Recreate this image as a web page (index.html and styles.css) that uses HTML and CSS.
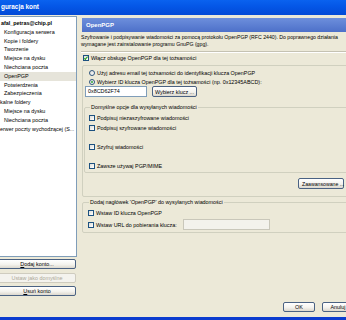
FILE: index.html
```html
<!DOCTYPE html>
<html lang="pl">
<head>
    <meta charset="UTF-8">
    <meta name="viewport" content="width=device-width, initial-scale=1.0">
    <title>Konfiguracja kont</title>
    <link rel="stylesheet" href="styles.css">
</head>
<body>
    <div class="window">
        <div class="titlebar">guracja kont</div>

        <div class="main">
            <div class="sidebar">
                <div class="tree">
                    <div class="node root default">afal_petras@chip.pl</div>
                    <div class="node">Konfiguracja serwera</div>
                    <div class="node">Kopie i foldery</div>
                    <div class="node">Tworzenie</div>
                    <div class="node">Miejsce na dysku</div>
                    <div class="node">Niechciana poczta</div>
                    <div class="node selected">OpenPGP</div>
                    <div class="node">Potwierdzenia</div>
                    <div class="node">Zabezpieczenia</div>
                    <div class="node root">kalne foldery</div>
                    <div class="node">Miejsce na dysku</div>
                    <div class="node">Niechciana poczta</div>
                    <div class="node root">erwer poczty wychodzącej (S...</div>
                </div>
                <button class="btn side-btn"><u>D</u>odaj konto...</button>
                <button class="btn side-btn" disabled>Ustaw jako domyślne</button>
                <button class="btn side-btn"><u>U</u>suń konto</button>
            </div>

            <div class="pane">
                <div class="pane-header">OpenPGP</div>
                <p class="desc">Szyfrowanie i podpisywanie wiadomości za pomocą protokołu OpenPGP (RFC 2440). Do poprawnego działania<br>wymagane jest zainstalowanie programu GnuPG (gpg).</p>
                <div class="separator"></div>
                <label class="option enable"><span class="checkbox checked"></span>Włącz obsługę OpenPGP dla tej tożsamości</label>

                <div class="group key-group">
                    <label class="option"><span class="radio"></span>Użyj adresu email tej tożsamości do identyfikacji klucza OpenPGP</label>
                    <label class="option"><span class="radio checked"></span>Wybierz ID klucza OpenPGP dla tej tożsamości (np. 0x12345ABCD):</label>
                    <div class="key-row">
                        <div class="textbox key-box">0x8CD62F74</div>
                        <button class="btn key-btn">Wybierz klucz ...</button>
                    </div>

                    <fieldset class="group defaults">
                        <legend>Domyślne opcje dla wysyłanych wiadomości</legend>
                        <label class="option first"><span class="checkbox"></span>Podpisuj niezaszyfrowane wiadomości</label>
                        <label class="option near"><span class="checkbox"></span>Podpisuj szyfrowane wiadomości</label>
                        <label class="option far"><span class="checkbox"></span>Szyfruj wiadomości</label>
                        <label class="option far"><span class="checkbox"></span>Zawsze używaj PGP/MIME</label>
                    </fieldset>

                    <div class="advanced-row">
                        <button class="btn advanced-btn">Zaawansowane ...</button>
                    </div>
                </div>

                <fieldset class="group header-group">
                    <legend>Dodaj nagłówek 'OpenPGP' do wysyłanych wiadomości</legend>
                    <label class="option first"><span class="checkbox"></span>Wstaw ID klucza OpenPGP</label>
                    <label class="option url-row"><span class="checkbox"></span>Wstaw URL do pobierania klucza:<span class="textbox url-box"></span></label>
                </fieldset>
            </div>
        </div>

        <div class="footer">
            <button class="btn dlg-btn">OK</button>
            <button class="btn dlg-btn">Anuluj</button>
        </div>
    </div>
</body>
</html>
```

FILE: styles.css
```css
html, body {
    margin: 0;
    padding: 0;
    overflow: hidden;
}

body {
    background: #ece9d8;
    font-family: 'Liberation Sans', Arial, sans-serif;
    font-size: 5.4px;
    color: #000;
}

.window {
    width: 356px;
    height: 320px;
    box-sizing: border-box;
    border-bottom: 3px solid #0b3ccf;
    background: #ece9d8;
}

.titlebar {
    height: 15px;
    background: linear-gradient(#0a62ef, #0456e6 45%, #034ad6);
    color: #fff;
    font-weight: bold;
    font-size: 6.4px;
    line-height: 14px;
    padding-left: 1px;
    white-space: nowrap;
}

.main {
    display: flex;
    height: 285px;
}

/* account tree + buttons */
.sidebar {
    width: 77px;
    flex-shrink: 0;
}

.tree {
    box-sizing: border-box;
    height: 241px;
    margin-top: 1px;
    padding-top: 2px;
    background: #fff;
    border: 1px solid #7f9db9;
    border-left: none;
}

.node {
    height: 8.8px;
    line-height: 8.8px;
    padding-left: 4px;
    white-space: nowrap;
    overflow: hidden;
}

.node.root {
    padding-left: 0;
}

.node.default {
    font-weight: bold;
    padding-left: 1px;
}

.node.selected {
    background: #e6e4da;
}

.btn {
    box-sizing: border-box;
    height: 10px;
    padding: 0;
    border: 1px solid #4a6283;
    border-radius: 2px;
    background: linear-gradient(#ffffff, #f4f3ee 55%, #dcd8ce);
    font-family: inherit;
    font-size: 5.4px;
    line-height: 8px;
    color: #000;
    white-space: nowrap;
}

.btn u {
    text-decoration: underline;
}

.side-btn {
    display: block;
    width: 78px;
    margin-left: -2px;
    margin-top: 3px;
}

.side-btn:first-of-type {
    margin-top: 2px;
}

.side-btn:disabled {
    margin-top: 4px;
    border-color: #cfccbf;
    background: #f4f3ee;
    color: #aca899;
}

/* right pane */
.pane {
    flex: 1;
    min-width: 0;
    margin-left: 4px;
    padding-right: 2px;
}

.pane-header {
    margin: 3px 0 0 1px;
    height: 14px;
    background: linear-gradient(#6d8fdc, #4d70c9);
    color: #fff;
    font-weight: bold;
    font-size: 6px;
    line-height: 14px;
    padding-left: 4px;
}

.desc {
    margin: 2px 0 0;
    font-size: 5.2px;
    line-height: 7px;
    white-space: nowrap;
}

.separator {
    margin-top: 3px;
    height: 1px;
    border-top: 1px solid #c5c2b2;
    background: #fff;
}

.option {
    display: flex;
    align-items: center;
    height: 8px;
    gap: 2px;
    white-space: nowrap;
}

.option.enable {
    margin-top: 1px;
    padding-left: 2px;
}

.checkbox, .radio {
    position: relative;
    box-sizing: border-box;
    width: 6px;
    height: 6px;
    flex-shrink: 0;
    border: 1px solid #1c5180;
    background: linear-gradient(135deg, #dcdcd7, #fff);
}

.radio {
    border-radius: 50%;
    border-color: #30557e;
}

.checkbox.checked::after {
    content: '';
    position: absolute;
    left: 1.3px;
    top: 0;
    width: 1.4px;
    height: 2.6px;
    border-right: 1px solid #21a121;
    border-bottom: 1px solid #21a121;
    transform: rotate(40deg);
}

.radio.checked::after {
    content: '';
    position: absolute;
    left: 1px;
    top: 1px;
    width: 2px;
    height: 2px;
    border-radius: 50%;
    background: #2fa83a;
}

.group {
    border: 1px solid #d0d0bf;
    border-radius: 2px;
}

fieldset.group {
    min-width: 0;
    margin: 0;
    padding: 0;
}

fieldset.group legend {
    padding: 0 1px;
    margin-left: 1px;
    line-height: 7px;
    height: 7px;
}

.key-group {
    margin: 3px 0 0 1px;
    padding: 2px 0 7px 2px;
}

.key-group > .option {
    height: 9px;
    padding-left: 4px;
}

.key-row {
    display: flex;
    align-items: center;
    gap: 5px;
}

.textbox {
    box-sizing: border-box;
    height: 11px;
    border: 1px solid #7f9db9;
    background: #fff;
    line-height: 9px;
    padding-left: 2px;
}

.key-box {
    width: 62px;
}

.key-btn {
    width: 45px;
    height: 11px;
}

.defaults {
    margin: 6.5px 0 0 -1px !important;
    padding: 3.5px 0 2px 4px !important;
}

.defaults .near {
    margin-top: 2px;
}

.defaults .far {
    margin-top: 11px;
}

.advanced-row {
    display: flex;
    justify-content: flex-end;
    margin-top: 5px;
    padding-right: 9px;
}

.advanced-btn {
    width: 46px;
    height: 11px;
    text-align: left;
    padding-left: 3px;
    font-size: 5.2px;
}

.header-group {
    margin: 1.5px 0 0 1px !important;
    padding: 3.5px 0 2px 5px !important;
}

.header-group .url-row {
    height: 11px;
    margin-top: 2px;
}

.url-box {
    width: 87px;
    margin-left: 4px;
    border-color: #c9c7ba;
    background: #f3f2ec;
}

/* dialog buttons */
.footer {
    display: flex;
    justify-content: flex-end;
    gap: 7px;
    padding: 2px 2px 0 0;
}

.dlg-btn {
    width: 32px;
}
```
